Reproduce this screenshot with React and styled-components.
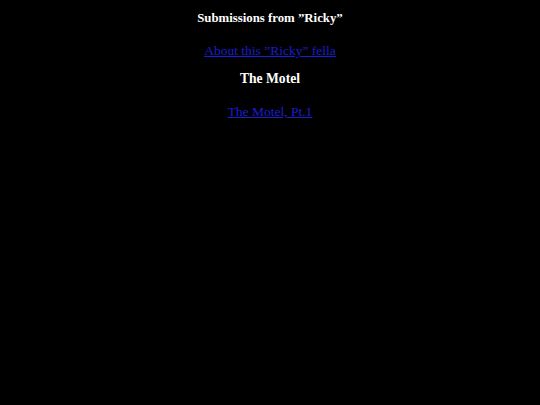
import React from "react";
import styled, { createGlobalStyle } from "styled-components";

const Global = createGlobalStyle`
  html, body { background: #000; }
  body {
    margin: 9px 8px 8px;
    font-family: "Liberation Serif", "Times New Roman", serif;
    color: #fff;
  }
`;

const Page = styled.main`
  display: flex;
  flex-direction: column;
  align-items: center;
  text-align: center;
`;

const Title = styled.h3`
  margin: 0;
  font-size: 12.8px;
  font-weight: bold;
  line-height: 18px;
`;

const Heading = styled.h3`
  margin: 0;
  font-size: 13.6px;
  font-weight: bold;
  line-height: 18px;
`;

const Entry = styled.p`
  margin: ${(p) => p.$mt}px 0 ${(p) => p.$mb}px;
  font-size: 13.5px;
  line-height: 18px;
`;

const Link = styled.a`
  color: #1c1cd0;
  text-decoration: underline;
`;

export default function App() {
  return (
    <>
      <Global />
      <Page>
        <Title>Submissions from ”Ricky”</Title>
        <Entry $mt={15} $mb={10}>
          <Link href="#">About this ”Ricky” fella</Link>
        </Entry>
        <Heading>The Motel</Heading>
        <Entry $mt={15} $mb={0}>
          <Link href="#">The Motel, Pt.1</Link>
        </Entry>
      </Page>
    </>
  );
}
